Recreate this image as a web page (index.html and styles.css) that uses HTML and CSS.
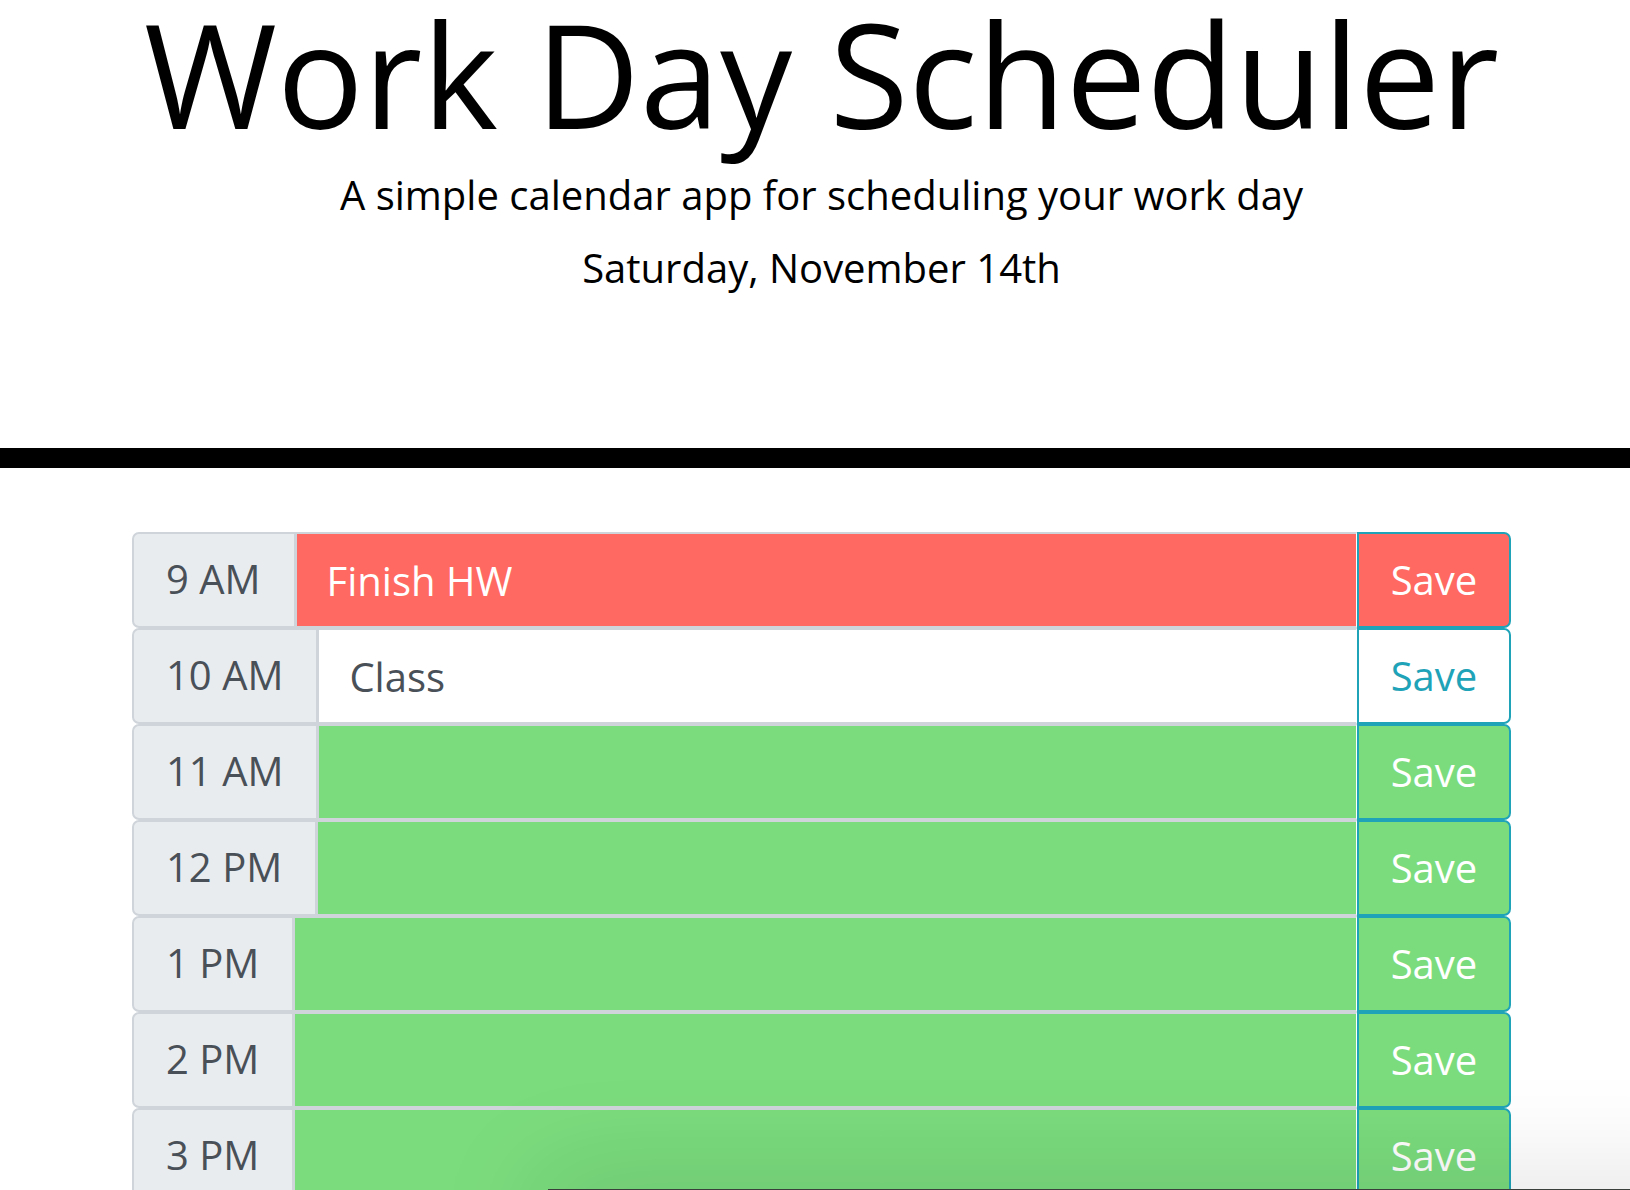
FILE: index.html
```html
<!DOCTYPE html>
<html lang="en">
<head>
<meta charset="utf-8">
<title>Work Day Scheduler</title>
<link rel="stylesheet" href="styles.css">
</head>
<body>
<header class="jumbotron">
  <h1 class="title">Work Day Scheduler</h1>
  <p class="lead">A simple calendar app for scheduling your work day</p>
  <p class="current-day">Saturday, November 14th</p>
</header>
<hr class="divider">
<main class="container">
  <div class="time-block">
    <div class="hour">9 AM</div>
    <textarea class="description present">Finish HW</textarea>
    <button class="save-btn present">Save</button>
  </div>
  <div class="time-block">
    <div class="hour">10 AM</div>
    <textarea class="description blank">Class</textarea>
    <button class="save-btn blank">Save</button>
  </div>
  <div class="time-block">
    <div class="hour">11 AM</div>
    <textarea class="description future"></textarea>
    <button class="save-btn future">Save</button>
  </div>
  <div class="time-block">
    <div class="hour">12 PM</div>
    <textarea class="description future"></textarea>
    <button class="save-btn future">Save</button>
  </div>
  <div class="time-block">
    <div class="hour">1 PM</div>
    <textarea class="description future"></textarea>
    <button class="save-btn future">Save</button>
  </div>
  <div class="time-block">
    <div class="hour">2 PM</div>
    <textarea class="description future"></textarea>
    <button class="save-btn future">Save</button>
  </div>
  <div class="time-block">
    <div class="hour">3 PM</div>
    <textarea class="description future"></textarea>
    <button class="save-btn future">Save</button>
  </div>
  <div class="time-block">
    <div class="hour">4 PM</div>
    <textarea class="description future"></textarea>
    <button class="save-btn future">Save</button>
  </div>
  <div class="time-block">
    <div class="hour">5 PM</div>
    <textarea class="description future"></textarea>
    <button class="save-btn future">Save</button>
  </div>
</main>
<div class="window-shadow"></div>
</body>
</html>
```
FILE: styles.css
```css
html, body {
  margin: 0;
  padding: 0;
  background: #ffffff;
  font-family: "Open Sans", "DejaVu Sans", sans-serif;
  overflow: hidden;
}

.jumbotron {
  padding: 0 0 0 13px;
  text-align: center;
  color: #000000;
}

.title {
  margin: 0;
  font-size: 144px;
  font-weight: 400;
  line-height: 147px;
}

.lead {
  margin: 18px 0 0;
  font-size: 40px;
  line-height: 60px;
}

.current-day {
  margin: 13px 0 0;
  font-size: 40px;
  line-height: 60px;
}

.divider {
  margin: 150px 0 0;
  height: 20px;
  border: 0;
  background: #000000;
}

.container {
  margin: 64px 0 0;
  padding: 0 119px 0 132px;
  display: flex;
  flex-direction: column;
}

.time-block {
  display: flex;
  height: 96px;
}

.hour {
  flex: none;
  box-sizing: border-box;
  padding: 15px 33px 0 32px;
  font-size: 40px;
  line-height: 60px;
  color: #495057;
  background: #e9ecef;
  border: 2px solid #ced4da;
  border-radius: 7px 0 0 7px;
}

.description {
  flex: 1;
  box-sizing: border-box;
  margin: 0;
  padding: 17px 30px 0;
  height: 96px;
  resize: none;
  font-family: "Open Sans", "DejaVu Sans", sans-serif;
  font-size: 40px;
  line-height: 60px;
  border: 2px solid #ced4da;
  border-left-width: 1px;
  border-right: 1px solid #ffffff;
  border-radius: 0;
  outline: none;
  overflow: hidden;
}

.save-btn {
  flex: none;
  box-sizing: border-box;
  width: 154px;
  height: 96px;
  margin: 0;
  padding: 0;
  font-family: "Open Sans", "DejaVu Sans", sans-serif;
  font-size: 40px;
  line-height: 60px;
  border: 2px solid #1fa3b8;
  border-radius: 0 7px 7px 0;
  cursor: pointer;
}

.present {
  background: #ff6961;
  color: #ffffff;
}

.future {
  background: #7bdc7d;
  color: #ffffff;
}

.blank {
  background: #ffffff;
  color: #495057;
}

.save-btn.blank {
  color: #1fa3b8;
}

.window-shadow {
  position: fixed;
  left: 548px;
  top: 1189px;
  width: 1200px;
  height: 60px;
  background: #3b3f3b;
  box-shadow: 0 0 110px 10px rgba(0, 0, 0, 0.13);
}
```
